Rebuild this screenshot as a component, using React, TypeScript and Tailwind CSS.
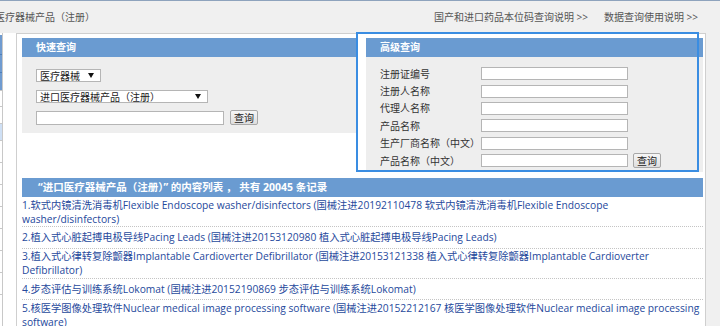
const font = "font-['Open_Sans','Noto_Sans_CJK_SC',sans-serif]";

const items = [
  "1.软式内镜清洗消毒机Flexible Endoscope washer/disinfectors (国械注进20192110478 软式内镜清洗消毒机Flexible Endoscope washer/disinfectors)",
  "2.植入式心脏起搏电极导线Pacing Leads (国械注进20153120980 植入式心脏起搏电极导线Pacing Leads)",
  "3.植入式心律转复除颤器Implantable Cardioverter Defibrillator (国械注进20153121338 植入式心律转复除颤器Implantable Cardioverter Defibrillator)",
  "4.步态评估与训练系统Lokomat (国械注进20152190869 步态评估与训练系统Lokomat)",
  "5.核医学图像处理软件Nuclear medical image processing software (国械注进20152212167 核医学图像处理软件Nuclear medical image processing software)",
];

const fields = ["注册证编号", "注册人名称", "代理人名称", "产品名称", "生产厂商名称（中文）", "产品名称（中文）"];

function Arrow() {
  return (
    <svg width="6" height="5" viewBox="0 0 6 5" className="shrink-0">
      <path d="M0 0 L6 0 L3 5 Z" fill="#111" />
    </svg>
  );
}

function FakeSelect({ label, w }: { label: string; w: string }) {
  return (
    <div className={`${w} h-[13px] bg-white border border-[#b5b5b5] flex items-center justify-between pl-[3px] pr-[6px] text-[10px] leading-none text-[#222]`}>
      <span>{label}</span>
      <Arrow />
    </div>
  );
}

function QueryButton() {
  return (
    <button className="w-[28px] h-[15px] bg-gradient-to-b from-[#f6f6f6] to-[#dedede] border border-[#a8a8a8] rounded-[2px] text-[10px] leading-none text-[#222] flex items-center justify-center">
      查询
    </button>
  );
}

export default function App() {
  return (
    <div className={`w-[720px] h-[326px] overflow-hidden bg-[#f0f0f0] border-t border-[#8ea3bd] relative ${font}`}>
      {/* top bar */}
      <div className="h-[32px] flex items-center text-[10px] text-[#555]">
        <span className="ml-[-5px]">医疗器械产品（注册）</span>
        <div className="ml-auto flex gap-[16px] mr-[22px]">
          <span>国产和进口药品本位码查询说明 &gt;&gt;</span>
          <span>数据查询使用说明 &gt;&gt;</span>
        </div>
      </div>

      <div className="flex h-[293px]">
        {/* left nav remnant */}
        <div className="w-[16px] bg-white flex">
          <div className="w-[3px] border-r border-[#c8c8c8] flex flex-col">
            <div className="h-[2px]" />
            <div className="h-[20px] bg-[#6f9bd0] border-b border-[#4e7fb9]" />
            <div className="h-[18px] bg-[#6f9bd0] border-b border-[#4e7fb9]" />
            <div className="h-[18px] bg-[#6f9bd0] border-b border-[#c8c8c8]" />
            <div className="h-[16px] border-b border-[#c8c8c8]" />
            <div className="h-[17px] border-b border-[#c8c8c8]" />
            <div className="h-[17px] bg-[#cfe0f5] border-b border-[#c8c8c8]" />
            <div className="h-[22px] border-b border-[#c8c8c8]" />
            <div className="h-[22px] border-b border-[#c8c8c8]" />
            <div className="h-[22px] border-b border-[#c8c8c8]" />
            <div className="h-[22px] border-b border-[#c8c8c8]" />
            <div className="h-[22px] border-b border-[#c8c8c8]" />
            <div className="h-[22px] border-b border-[#c8c8c8]" />
            <div className="h-[22px] border-b border-[#c8c8c8]" />
          </div>
        </div>

        {/* main container */}
        <div className="w-[690px] bg-white border-l border-r border-t border-[#cfcfcf] pl-[5px] pr-[2px] pt-[4px]">
          <div className="flex h-[134px]">
            {/* quick query */}
            <div className="w-[334px] flex flex-col">
              <div className="h-[19px] bg-[#6a9bd1] text-white font-bold text-[10px] flex items-center pl-[14px]">快速查询</div>
              <div className="h-[76px] bg-[#eeeeee] pl-[14px] pt-[12px] flex flex-col">
                <FakeSelect label="医疗器械" w="w-[65px]" />
                <div className="h-[8px]" />
                <FakeSelect label="进口医疗器械产品（注册）" w="w-[172px]" />
                <div className="h-[7px]" />
                <div className="flex items-center gap-[6px]">
                  <div className="w-[188px] h-[14px] bg-white border border-[#b5b5b5]" />
                  <QueryButton />
                </div>
              </div>
            </div>

            <div className="w-[10px]" />

            {/* advanced query */}
            <div className="w-[337px] flex flex-col">
              <div className="h-[19px] bg-[#6a9bd1] text-white font-bold text-[10px] flex items-center pl-[14px]">高级查询</div>
              <div className="h-[115px] bg-[#eeeeee] pl-[14px] pt-[8px] flex flex-col">
                {fields.map((f, i) => (
                  <div key={i} className="h-[17.4px] flex items-center">
                    <span className="w-[101px] text-[10px] text-[#333] leading-none">{f}</span>
                    <div className="w-[147px] h-[13px] bg-white border border-[#b5b5b5]" />
                    {i === fields.length - 1 && (
                      <div className="ml-[5px]">
                        <QueryButton />
                      </div>
                    )}
                  </div>
                ))}
              </div>
            </div>
          </div>

          {/* list */}
          <div className="mt-[6px]">
            <div className="h-[19px] bg-[#6a9bd1] text-white font-bold text-[10.5px] flex items-center pl-[16px]">
              “进口医疗器械产品（注册）” 的内容列表 ， 共有 20045 条记录
            </div>
            {items.map((t, i) => (
              <div key={i} className="min-h-[21.5px] py-[0.5px] flex items-center border-b border-dotted border-[#c4c4c4]">
                <span className="text-[10.25px] leading-[14px] text-[#26499c]">{t}</span>
              </div>
            ))}
          </div>
        </div>
      </div>

      {/* highlight frame */}
      <div className="absolute left-[356px] top-[31px] w-[343px] h-[140px] border-2 border-[#3a8de2] pointer-events-none" />
    </div>
  );
}
